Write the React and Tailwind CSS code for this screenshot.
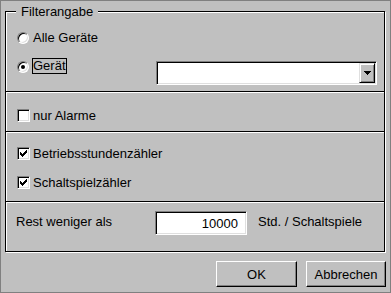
import React from "react";

function Radio({ checked }) {
  return (
    <div className="w-[12px] h-[12px] shrink-0 rounded-full bg-white border border-t-[#808080] border-l-[#808080] border-r-white border-b-white shadow-[inset_1px_1px_0_#000,inset_-1px_-1px_0_#dfdfdf] flex items-center justify-center">
      {checked && <div className="w-[4px] h-[4px] rounded-full bg-black" />}
    </div>
  );
}

function Check({ checked }) {
  return (
    <div className="w-[13px] h-[13px] shrink-0 bg-white border border-t-[#808080] border-l-[#808080] border-r-white border-b-white shadow-[inset_1px_1px_0_#000,inset_-1px_-1px_0_#dfdfdf] flex items-center justify-center">
      {checked && (
        <svg width="7" height="7" viewBox="0 0 7 7" shapeRendering="crispEdges">
          <rect x="6" y="0" width="1" height="1" fill="#000" />
          <rect x="5" y="1" width="2" height="1" fill="#000" />
          <rect x="0" y="2" width="1" height="1" fill="#000" />
          <rect x="4" y="2" width="3" height="1" fill="#000" />
          <rect x="0" y="3" width="2" height="1" fill="#000" />
          <rect x="3" y="3" width="3" height="1" fill="#000" />
          <rect x="0" y="4" width="5" height="1" fill="#000" />
          <rect x="1" y="5" width="3" height="1" fill="#000" />
          <rect x="2" y="6" width="1" height="1" fill="#000" />
        </svg>
      )}
    </div>
  );
}

function Button({ children, w }) {
  return (
    <button
      className={`${w} h-[26px] bg-[#c0c0c0] border border-t-white border-l-white border-r-black border-b-black shadow-[inset_-1px_-1px_0_#808080] flex items-center justify-center text-[13px] leading-[15px] text-black`}
    >
      {children}
    </button>
  );
}

export default function App() {
  return (
    <div className="w-[391px] h-[293px] bg-[#c0c0c0] border border-[#808080] font-['Liberation_Sans',Arial,sans-serif] text-[13px] leading-[15px] text-black flex flex-col overflow-hidden">
      <div className="relative ml-[4px] mt-[10px] w-[380px] h-[241px] border border-black shadow-[1px_1px_0_#fff,inset_1px_1px_0_#fff] flex flex-col">
        <div className="absolute left-[10px] top-[-8px] px-[5px] bg-[#c0c0c0] leading-[15px]">
          Filterangabe
        </div>

        {/* Section 1 */}
        <div className="h-[79px] pl-[11px] pr-[7px] pt-[18px] flex flex-col">
          <div className="h-[15px] flex items-center gap-[4px]">
            <Radio />
            <span>Alle Geräte</span>
          </div>
          <div className="mt-[13px] flex items-start">
            <div className="h-[16px] flex items-center">
              <div className="mt-[1px]">
                <Radio checked />
              </div>
              <span className="ml-[3px] border border-black leading-[14px]">Gerät</span>
            </div>
            <div className="ml-auto mt-[3px] w-[221px] h-[24px] p-[1px] bg-white border border-t-[#808080] border-l-[#808080] border-r-white border-b-white shadow-[inset_1px_1px_0_#000,inset_-1px_-1px_0_#dfdfdf] flex justify-end">
              <div className="w-[16px] h-[20px] bg-[#c0c0c0] border border-t-[#dfdfdf] border-l-[#dfdfdf] border-r-black border-b-black shadow-[inset_1px_1px_0_#fff,inset_-1px_-1px_0_#808080] flex items-center justify-center">
                <svg width="7" height="4" viewBox="0 0 7 4" shapeRendering="crispEdges">
                  <rect x="0" y="0" width="7" height="1" fill="#000" />
                  <rect x="1" y="1" width="5" height="1" fill="#000" />
                  <rect x="2" y="2" width="3" height="1" fill="#000" />
                  <rect x="3" y="3" width="1" height="1" fill="#000" />
                </svg>
              </div>
            </div>
          </div>
        </div>

        {/* Section 2 */}
        <div className="h-[40px] border-t border-black shadow-[inset_0_1px_0_#fff] pl-[11px] pt-[16px]">
          <div className="h-[15px] flex items-center gap-[3px]">
            <Check />
            <span>nur Alarme</span>
          </div>
        </div>

        {/* Section 3 */}
        <div className="h-[70px] border-t border-black shadow-[inset_0_1px_0_#fff] pl-[11px] pt-[14px] flex flex-col">
          <div className="h-[15px] flex items-center gap-[3px]">
            <Check checked />
            <span>Betriebsstundenzähler</span>
          </div>
          <div className="mt-[14px] h-[15px] flex items-center gap-[3px]">
            <Check checked />
            <span>Schaltspielzähler</span>
          </div>
        </div>

        {/* Section 4 */}
        <div className="h-[50px] border-t border-black shadow-[inset_0_1px_0_#fff] pl-[10px] pt-[9px] flex items-start">
          <span className="w-[139px] mt-[3px]">Rest weniger als</span>
          <div className="w-[92px] h-[24px] pr-[8px] bg-white border border-t-[#808080] border-l-[#808080] border-r-white border-b-white shadow-[inset_1px_1px_0_#000,inset_-1px_-1px_0_#dfdfdf] flex items-center justify-end">
            10000
          </div>
          <span className="ml-[11px] mt-[3px]">Std. / Schaltspiele</span>
        </div>
      </div>

      <div className="mt-[9px] pr-[4px] flex justify-end gap-[9px]">
        <Button w="w-[81px]">OK</Button>
        <Button w="w-[80px]">Abbrechen</Button>
      </div>
    </div>
  );
}
